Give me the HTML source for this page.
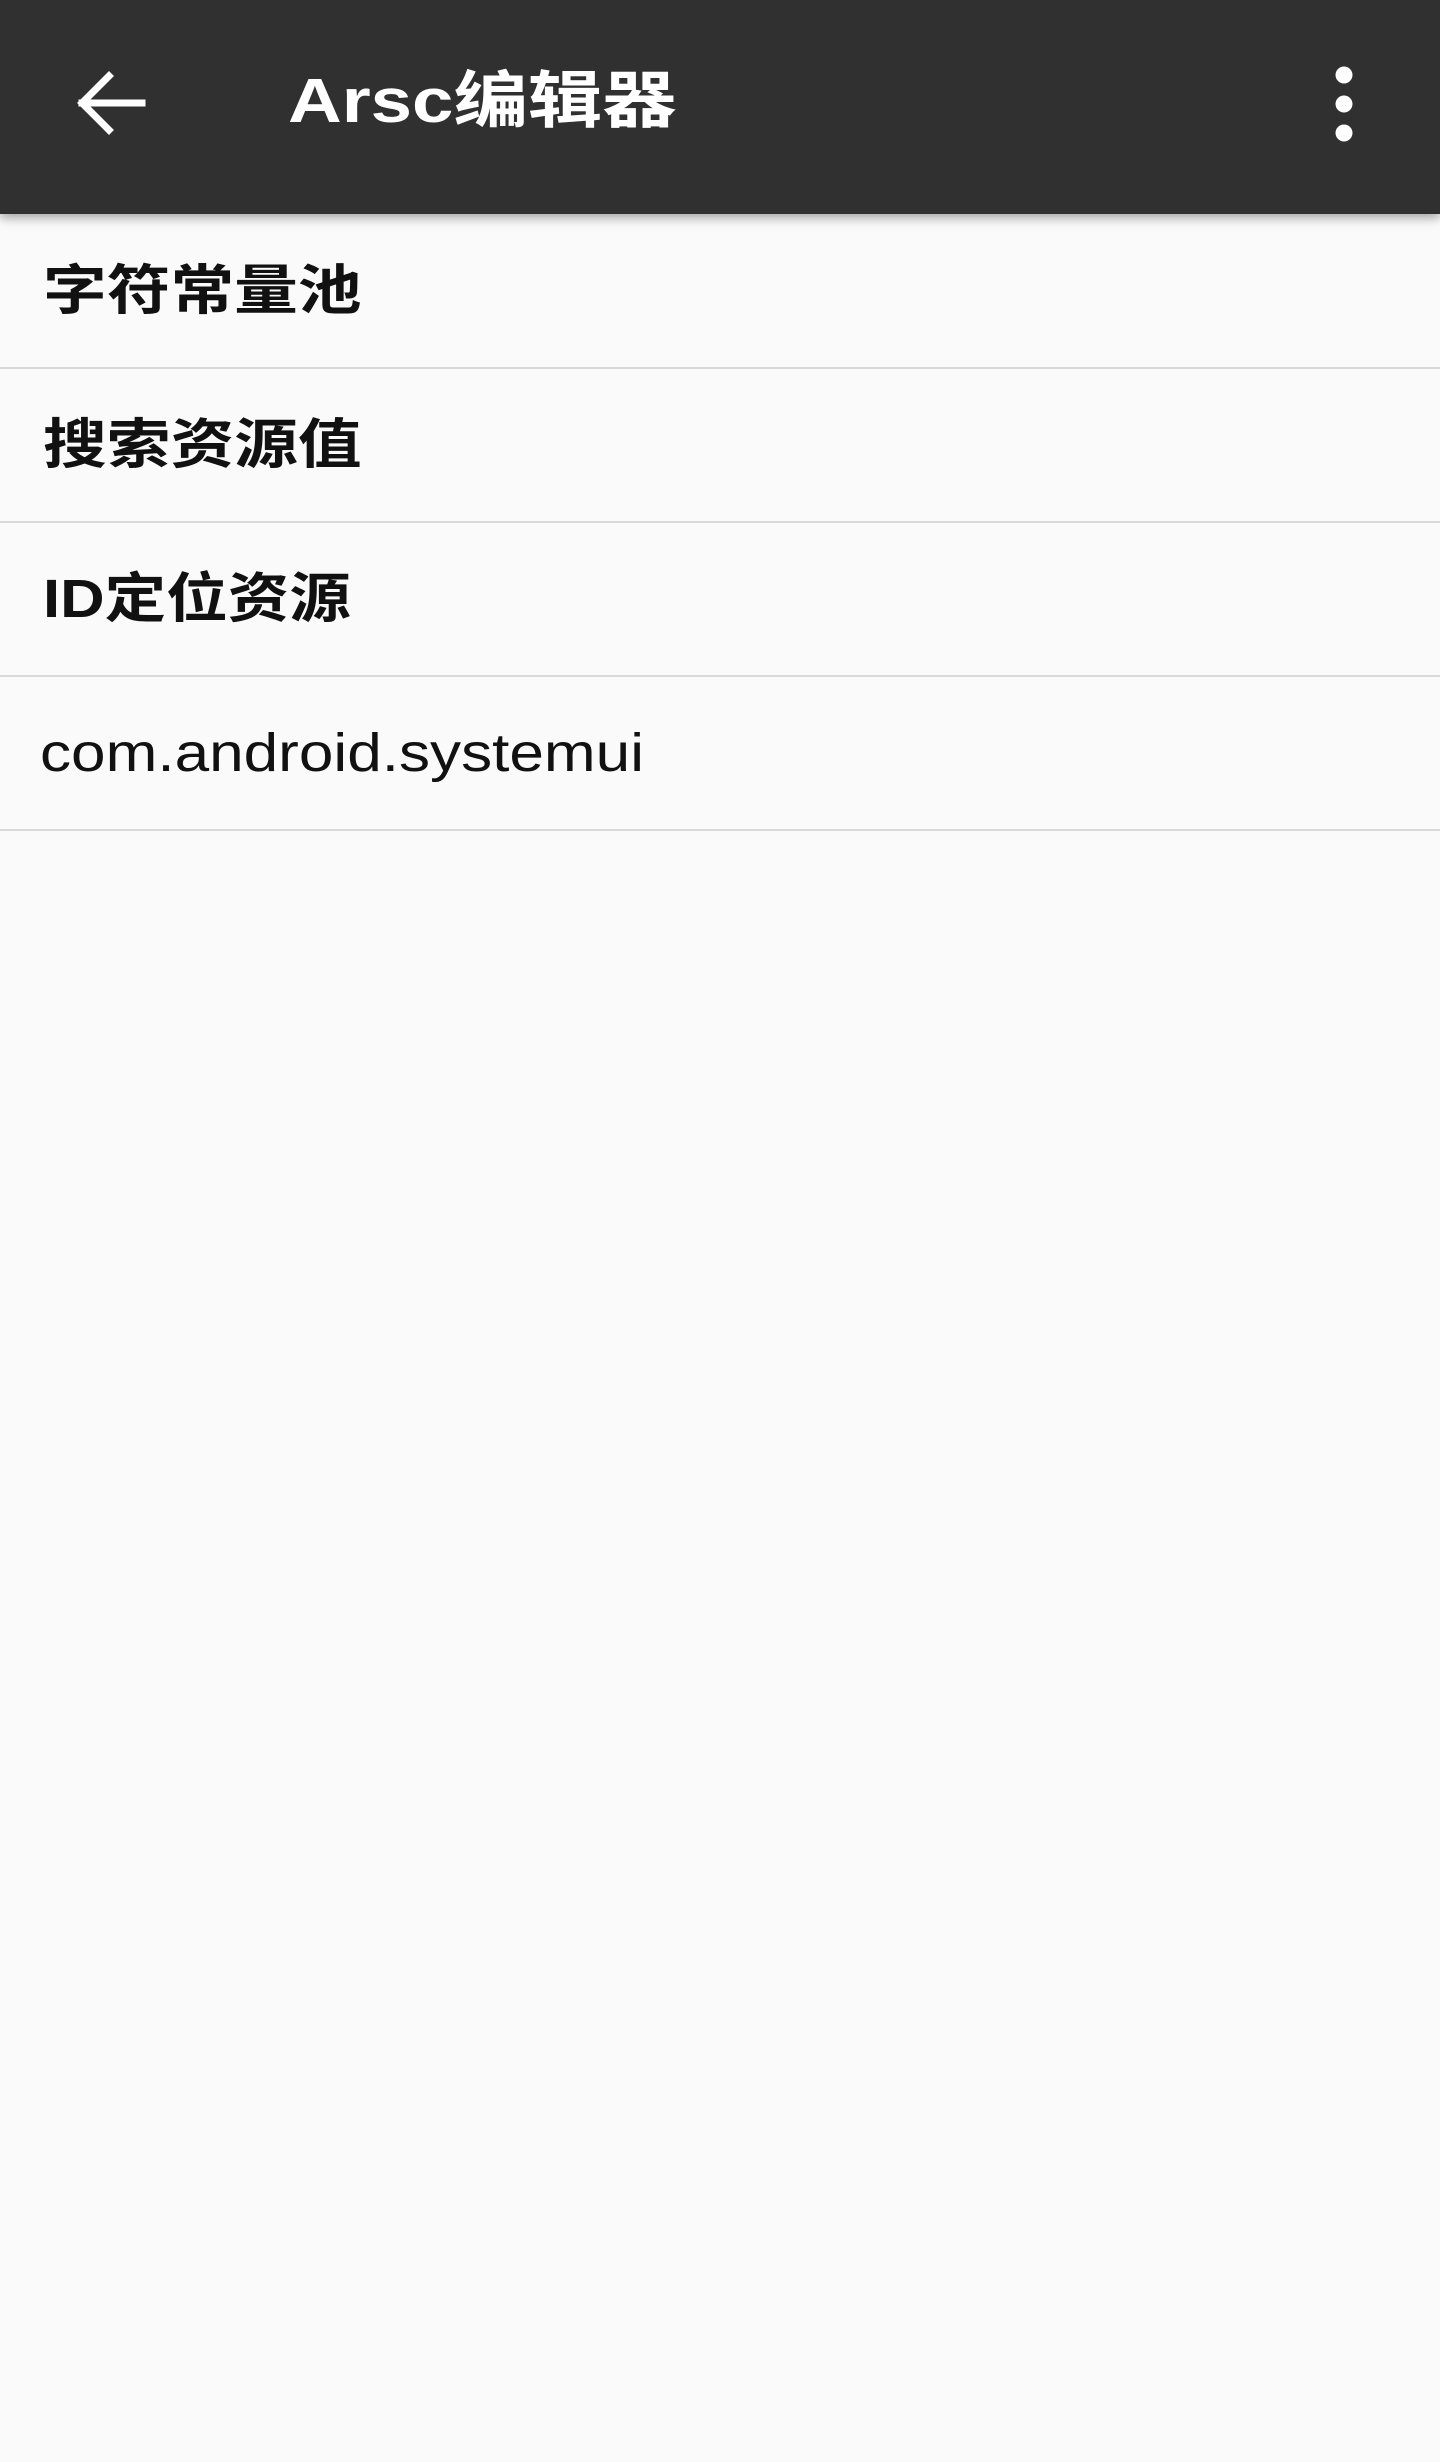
<!DOCTYPE html>
<html><head><meta charset="utf-8"><style>
html,body{margin:0;padding:0;width:1440px;height:2462px;background:#fafafa;overflow:hidden}
.bar{position:absolute;left:0;top:0;width:1440px;height:214px;background:#303030;box-shadow:0 4px 10px rgba(0,0,0,.35)}
.title{position:absolute;left:288px;top:60px;color:#fff;font:bold 62px/84px "Liberation Sans","Noto Sans CJK SC",sans-serif;white-space:nowrap;transform:scaleX(1.2);transform-origin:0 50%}
.row{position:absolute;left:0;width:1440px;height:153px;border-bottom:2px solid #d8d8d8}
.row span{position:absolute;left:43px;top:50%;transform:translateY(-50%) scaleX(1.18);transform-origin:0 50%;font:bold 54px/1 "Liberation Sans","Noto Sans CJK SC",sans-serif;color:#111;white-space:nowrap}
.row span.i{transform:translateY(-50%) scaleX(1.14)}
.row span.n{font-weight:normal;left:40px;transform:translateY(-50%) scaleX(1.15)}
</style></head><body>
<div class="bar">
<svg style="position:absolute;left:76px;top:70px" width="72" height="66" viewBox="0 0 72 66"><path d="M6 33H66M33 6L6 33L33 60" stroke="#fff" stroke-width="7" fill="none" stroke-linecap="square"/></svg>
<div class="title">Arsc编辑器</div>
<svg style="position:absolute;left:1330px;top:66px" width="28" height="76"><circle cx="14" cy="9" r="8.5" fill="#fff"/><circle cx="14" cy="38" r="8.5" fill="#fff"/><circle cx="14" cy="67" r="8.5" fill="#fff"/></svg>
</div>
<div class="row" style="top:214px"><span>字符常量池</span></div>
<div class="row" style="top:368px"><span>搜索资源值</span></div>
<div class="row" style="top:522px"><span class="i">ID定位资源</span></div>
<div class="row" style="top:676px"><span class="n">com.android.systemui</span></div>
</body></html>
